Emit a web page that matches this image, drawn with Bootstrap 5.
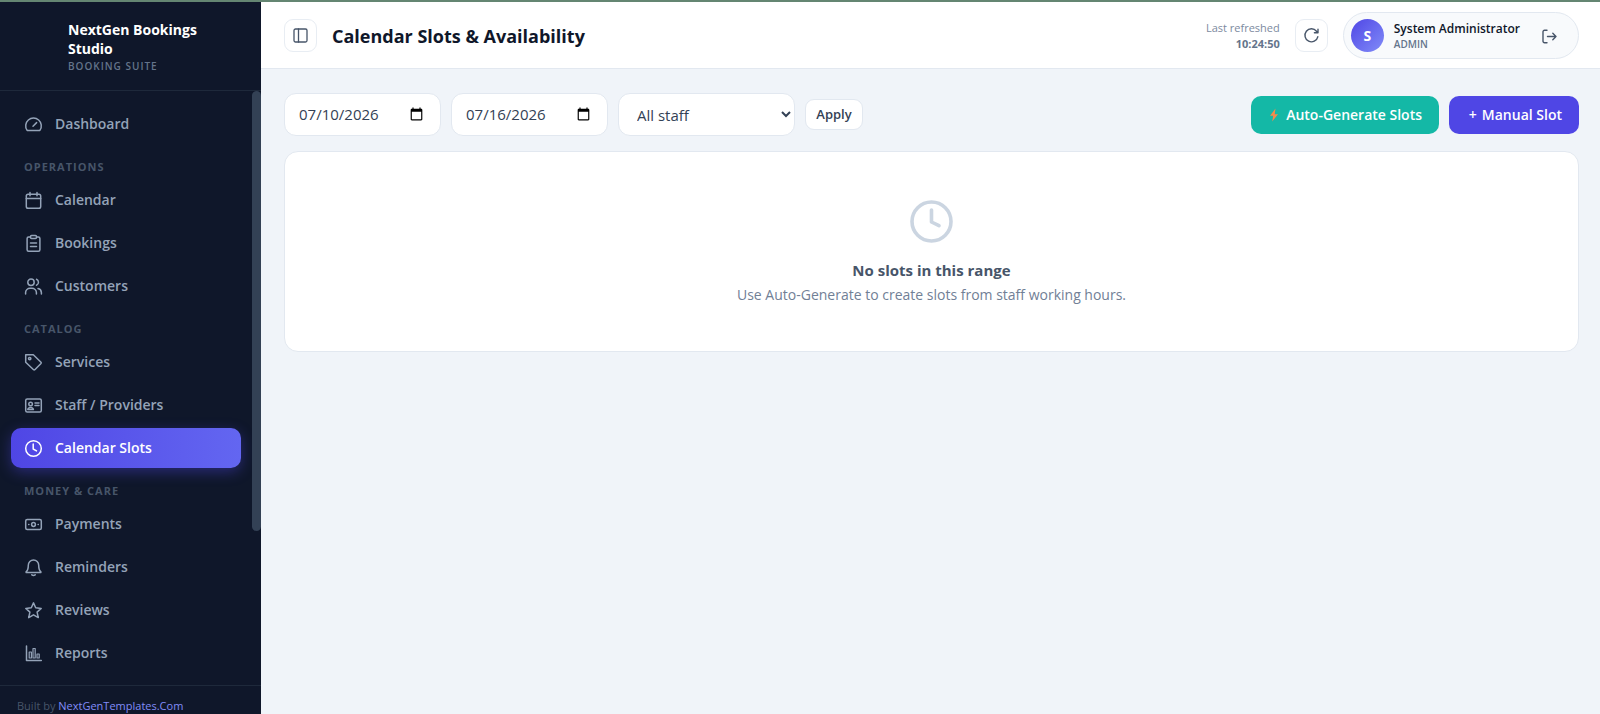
<!DOCTYPE html>
<html lang="en">
<head>
<meta charset="utf-8">
<meta name="viewport" content="width=device-width, initial-scale=1">
<title>Calendar Slots &amp; Availability</title>
<link rel="stylesheet" href="https://cdn.jsdelivr.net/npm/bootstrap@5.3.0/dist/css/bootstrap.min.css">
<style>
  body { font-family: "Open Sans", "Noto Sans", sans-serif; font-size: 15px; background: #f0f4f9; color: #334155; }
  svg { flex: none; fill: none; stroke: currentColor; stroke-linecap: round; stroke-linejoin: round; overflow: visible; }
  .app-shell { height: 100vh; border-top: 2px solid #648672; }

  .side-panel { flex: 0 0 261px; background: #0f172a; color: #94a3b8; }
  .brand-box { padding: 18px 16px 16px 68px; border-bottom: 1px solid #1e293b; }
  .brand-name { font-size: 14px; line-height: 19px; font-weight: 700; color: #fff; }
  .brand-sub { font-size: 10px; line-height: 16px; font-weight: 600; letter-spacing: 1px; color: #64748b; }
  .side-nav { padding: 13px 11px 0; gap: 3px; }
  .side-link { display: flex; align-items: center; gap: 13px; padding: 10px 14px; line-height: 20px; font-size: 14px; font-weight: 600; color: #94a3b8; border-radius: 10px; text-decoration: none; }
  .side-link svg { width: 17px; height: 17px; stroke-width: 1.5; }
  .side-link:hover { color: #fff; }
  .side-link.active { color: #fff; background: linear-gradient(90deg, #4f46e5, #6366f1); box-shadow: 0 4px 14px rgba(79, 70, 229, .4); }
  .side-label { padding: 12px 13px 2px; font-size: 11px; line-height: 16px; font-weight: 700; letter-spacing: 1px; color: #475569; }
  .scroll-track { flex: 0 0 9px; }
  .scroll-thumb { height: 74%; border-radius: 5px; background: #334155; }
  .side-foot { padding: 12px 17px 0; border-top: 1px solid #1e293b; font-size: 11px; line-height: 16px; color: #475569; }
  .side-foot a { color: #818cf8; text-decoration: none; }

  .top-bar { height: 67px; padding: 1px 21px 0 23px; background: #fff; border-bottom: 1px solid #e2e8f0; gap: 15px; }
  .top-bar h1 { font-size: 18px; line-height: 24px; font-weight: 700; color: #0f172a; }
  .square-btn { width: 33px; height: 33px; padding: 0; display: grid; place-items: center; background: #fff; border: 1px solid #e8edf3; border-radius: 9px; color: #475569; }
  .refresh-note { font-size: 11px; line-height: 16px; color: #7c8aa0; }
  .refresh-note strong { color: #64748b; }
  .user-pill { height: 47px; padding: 0 21px 0 7px; gap: 10px; background: #f8fafc; border: 1px solid #e2e8f0; border-radius: 24px; }
  .avatar { width: 33px; height: 33px; border-radius: 50%; background: linear-gradient(135deg, #4f46e5, #818cf8); color: #fff; font-weight: 700; font-size: 14px; }
  .user-name { font-size: 12px; line-height: 16px; font-weight: 600; color: #0f172a; }
  .user-role { font-size: 10px; line-height: 14px; font-weight: 600; color: #64748b; }
  .exit-btn { padding: 0; border: 0; background: none; color: #475569; line-height: 1; margin-left: 12px; }

  .page-body { padding: 24px 21px 24px 23px; }
  .tool-row { gap: 10px; }
  .field { height: 43px; padding: 0 14px; font-size: 15px; color: #334155; background: #fff; border: 1px solid #e2e8f0; border-radius: 12px; }
  .date-field { width: 157px; }
  .staff-field { width: 177px; }
  .apply-btn { height: 31px; width: 58px; padding: 0; font-size: 13px; font-weight: 600; color: #334155; background: #fff; border: 1px solid #e2e8f0; border-radius: 9px; }
  .main-btn { height: 38px; padding: 0 17px; font-size: 14px; font-weight: 600; color: #fff; border: 0; border-radius: 10px; white-space: nowrap; gap: 5px; }
  .teal-btn { width: 188px; background: #14b8a6; }
  .indigo-btn { width: 130px; background: #4f46e5; }
  .bolt-icon { stroke: none; fill: #f58a4b; }
  .empty-card { margin-top: 15px; padding: 48px 16px 44px; border: 1px solid #e2e8f0; border-radius: 14px; background: #fff; }
  .empty-icon { stroke: #cbd5e1; stroke-width: 3.6; }
  .empty-card h2 { margin: 15px 0 1px; font-size: 15px; line-height: 24px; font-weight: 700; color: #475569; }
  .empty-card p { margin: 0; font-size: 14px; line-height: 24px; color: #718096; }
</style>
</head>
<body>
<div class="app-shell d-flex overflow-hidden">
  <aside class="side-panel d-flex flex-column">
    <div class="brand-box">
      <div class="brand-name">NextGen Bookings Studio</div>
      <div class="brand-sub">BOOKING SUITE</div>
    </div>
    <div class="d-flex flex-grow-1 overflow-hidden">
      <nav class="side-nav d-flex flex-column flex-grow-1" aria-label="Main">
        <a class="side-link" href="#"><svg viewBox="0 0 17 17"><path d="M2 14.2A7.8 7.8 0 1 1 15 14.2Q14.6 14.6 14 14.6H3Q2.4 14.6 2 14.2Z"/><path d="M8 10.2l3.6-3.6"/></svg>Dashboard</a>
        <div class="side-label">OPERATIONS</div>
        <a class="side-link" href="#"><svg viewBox="0 0 17 17"><rect x="1.3" y="2.2" width="14.4" height="14" rx="1.8"/><path d="M1.3 6.5h14.4M5 .6v3.2M12 .6v3.2"/></svg>Calendar</a>
        <a class="side-link" href="#"><svg viewBox="0 0 17 17"><path d="M5.5 2H3.6a1.5 1.5 0 0 0-1.5 1.5v11.3a1.5 1.5 0 0 0 1.5 1.5h9.8a1.5 1.5 0 0 0 1.5-1.5V3.5a1.5 1.5 0 0 0-1.5-1.5h-1.9"/><rect x="5.5" y=".6" width="6" height="3" rx="1"/><path d="M5.5 8h6M5.5 11.4h6"/></svg>Bookings</a>
        <a class="side-link" href="#"><svg viewBox="0 0 17 17"><circle cx="6" cy="4.2" r="3.2"/><path d="M.6 16v-1.5a4.5 4.5 0 0 1 4.5-4.3h1.8a4.5 4.5 0 0 1 4.5 4.3V16M11.5 1.3a3.2 3.2 0 0 1 0 5.9M13 10.6a4.3 4.3 0 0 1 3.4 4V16"/></svg>Customers</a>
        <div class="side-label">CATALOG</div>
        <a class="side-link" href="#"><svg viewBox="0 0 17 17"><path d="M.7.8h7.6l7.7 7.5q.5.6 0 1.2l-6.2 6.2q-.6.5-1.2 0L.7 8.3Z"/><circle cx="4.7" cy="4.6" r="1.2"/></svg>Services</a>
        <a class="side-link" href="#"><svg viewBox="0 0 17 17"><rect x=".7" y="2" width="15.6" height="13" rx="1.5"/><circle cx="5.6" cy="7" r="1.8"/><path d="M2.8 12.6q.4-2 2.8-2t2.8 2ZM10 6h4M10 8.6h4"/></svg>Staff / Providers</a>
        <a class="side-link active" aria-current="page" href="#"><svg viewBox="0 0 17 17"><circle cx="8.5" cy="8.5" r="7.8"/><path d="M8.2 4v5l3.3 1.9"/></svg>Calendar Slots</a>
        <div class="side-label">MONEY &amp; CARE</div>
        <a class="side-link" href="#"><svg viewBox="0 0 17 17"><rect x=".7" y="3.5" width="15.6" height="10" rx="1.5"/><circle cx="8.5" cy="8.5" r="1.9"/><path d="M3.7 8.5h.2M13.1 8.5h.2"/></svg>Payments</a>
        <a class="side-link" href="#"><svg viewBox="0 0 17 17"><path d="M3.3 6.2a5.2 5.2 0 0 1 10.4 0c0 3.6.8 5.500 2.200 6.600q.2.700-.4.700h-14q-.6 0-.4-.7c1.400-1.100 2.200-3 2.200-6.600ZM6.800 15.800q1.700 1.200 3.400 0"/></svg>Reminders</a>
        <a class="side-link" href="#"><svg viewBox="0 0 17 17"><path d="M8.5.9l2.2 4.9 5.5.6-4.1 3.7 1.2 5.5-4.8-2.8-4.8 2.8 1.2-5.5L.8 6.4l5.5-.6Z"/></svg>Reviews</a>
        <a class="side-link" href="#"><svg viewBox="0 0 17 17"><path d="M1.5 1v14.5h14.8"/><path d="M4.2 7h2.2v6H4.2ZM8 3.5h2.2V13H8ZM12 9h2.2v4H12Z" stroke-width="1.2"/></svg>Reports</a>
      </nav>
      <div class="scroll-track" aria-hidden="true"><div class="scroll-thumb"></div></div>
    </div>
    <div class="side-foot">Built by <a href="#">NextGenTemplates.Com</a></div>
  </aside>

  <div class="d-flex flex-column flex-grow-1">
    <header class="top-bar d-flex align-items-center">
      <button class="square-btn" type="button" aria-label="Toggle sidebar"><svg width="15" height="15" viewBox="0 0 15 15" stroke-width="1.3"><rect x="1" y="1" width="13" height="13" rx="1.5"/><path d="M5.5 1v13"/></svg></button>
      <h1 class="m-0 me-auto">Calendar Slots &amp; Availability</h1>
      <div class="refresh-note text-end">Last refreshed<br><strong>10:24:50</strong></div>
      <button class="square-btn" type="button" aria-label="Refresh"><svg width="15" height="15" viewBox="0 0 15 15" stroke-width="1.4"><path d="M13.8 8.8A6.5 6.5 0 1 1 12.5 3.2L14 4.8M14 1.2v3.6h-3.6"/></svg></button>
      <div class="user-pill d-flex align-items-center">
        <span class="avatar d-flex align-items-center justify-content-center">S</span>
        <div>
          <div class="user-name">System Administrator</div>
          <div class="user-role">ADMIN</div>
        </div>
        <button class="exit-btn" type="button" aria-label="Sign out"><svg width="15" height="15" viewBox="0 0 15 15" stroke-width="1.4"><path d="M5 1.2H2.5A1.5 1.5 0 0 0 1 2.7v9.6a1.5 1.5 0 0 0 1.5 1.5H5M5.5 7.5H14M10.8 4.3L14 7.5l-3.2 3.2"/></svg></button>
      </div>
    </header>

    <main class="page-body">
      <div class="tool-row d-flex align-items-center">
        <input class="field date-field" type="date" value="2026-07-10" aria-label="From date">
        <input class="field date-field" type="date" value="2026-07-16" aria-label="To date">
        <select class="field staff-field" aria-label="Staff"><option>All staff</option></select>
        <button class="apply-btn" type="button">Apply</button>
        <button class="main-btn teal-btn ms-auto d-flex align-items-center justify-content-end" type="button"><svg class="bolt-icon" width="14" height="14" viewBox="0 0 14 14"><path d="M8.5.5L3 7.800h3.200L5.200 13.500 11 6.200H7.700Z"/></svg>Auto-Generate Slots</button>
        <button class="main-btn indigo-btn d-flex align-items-center justify-content-end" type="button"><span>+</span>Manual Slot</button>
      </div>
      <section class="empty-card text-center">
        <svg class="empty-icon" width="43" height="43" viewBox="0 0 43 43"><circle cx="21.5" cy="21.5" r="19.5"/><path d="M21.5 10v12l7.5 3.6"/></svg>
        <h2>No slots in this range</h2>
        <p>Use Auto-Generate to create slots from staff working hours.</p>
      </section>
    </main>
  </div>
</div>
<script src="https://cdn.jsdelivr.net/npm/bootstrap@5.3.0/dist/js/bootstrap.bundle.min.js"></script>
</body>
</html>
